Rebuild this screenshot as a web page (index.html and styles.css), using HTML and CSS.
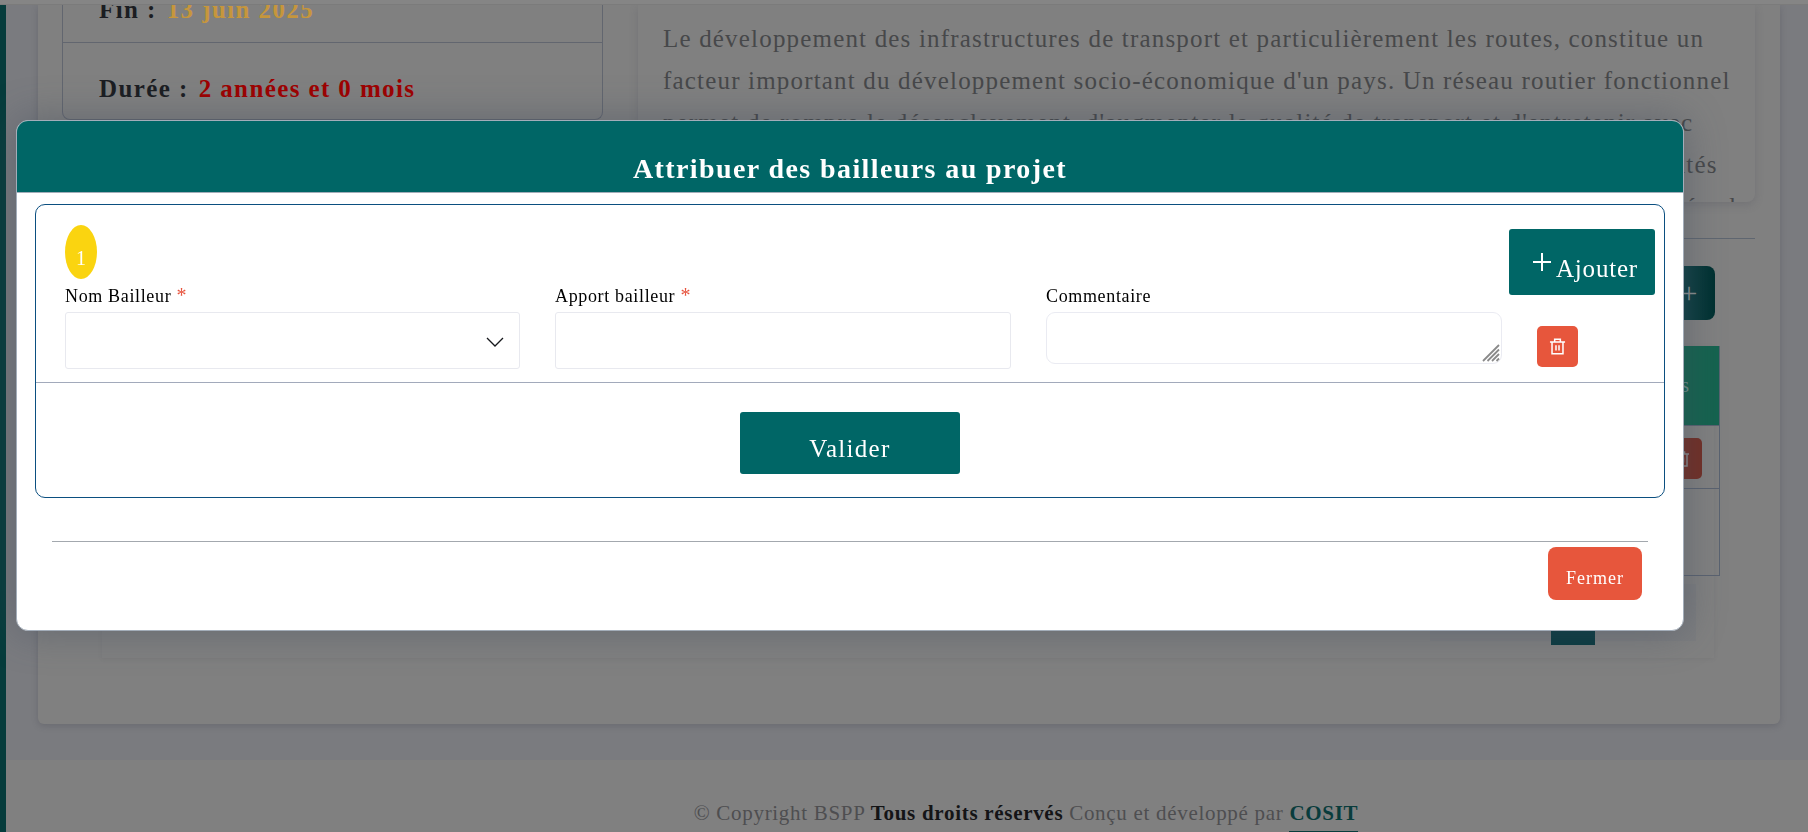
FILE: index.html
```html
<!DOCTYPE html>
<html lang="fr">
<head>
<meta charset="utf-8">
<title>Attribuer des bailleurs au projet</title>
<link rel="stylesheet" href="styles.css">
</head>
<body>
<div class="topbar"></div>
<div class="shell">
  <div class="strip"></div>
  <div class="main">
    <div class="sheet">
      <div class="top-row">
        <div class="info-card">
          <div class="info-row info-first"><span class="info-label">Fin :</span><span class="info-date">13 juin 2025</span></div>
          <div class="info-row info-last"><span class="info-label">Durée :</span><span class="info-red">2 années et 0 mois</span></div>
        </div>
        <div class="desc-card">
          <p class="desc">Le développement des infrastructures de transport et particulièrement les routes, constitue un<br>facteur important du développement socio-économique d'un pays. Un réseau routier fonctionnel<br>permet de rompre le désenclavement, d'augmenter la qualité de transport et d'entretenir avec<br>les territoires des échanges commerciaux réguliers et à soutenir ainsi durablement les activités<br>de production, tout en favorisant l'accès des populations aux services sociaux, et aux marchés, de</p>
        </div>
      </div>
      <div class="rule"></div>
      <div class="add-row"><div class="add-btn">+</div></div>
      <div class="panel">
        <div class="table">
          <div class="thead"><span>Actions</span></div>
          <div class="trow trow-a"><div class="del-dim"><svg class="trash-dim" viewBox="0 0 18 18"><path d="M2 4h14M6.5 4V2h5v2M4 4v12h10V4M7.5 7.5v5M10.5 7.5v5"/></svg></div></div>
          <div class="trow trow-b"></div>
        </div>
        <div class="pager"><div class="page-btn">1</div></div>
      </div>
    </div>
    <div class="footer">
      <p class="foot-text">© Copyright BSPP <strong class="foot-strong">Tous droits réservés</strong> Conçu et développé par <strong class="foot-link">COSIT</strong></p>
    </div>
  </div>
</div>

<div class="modal">
  <div class="modal-head"><h2 class="modal-title">Attribuer des bailleurs au projet</h2></div>
  <div class="box">
    <div class="form">
      <div class="form-main">
        <div class="badge">1</div>
        <div class="fields">
          <div class="field">
            <div class="label">Nom Bailleur <span class="req">*</span></div>
            <div class="control">
              <select class="input"></select>
              <svg class="chevron" viewBox="0 0 18 10"><path d="M1 1l8 8 8-8"/></svg>
            </div>
          </div>
          <div class="field">
            <div class="label">Apport bailleur <span class="req">*</span></div>
            <div class="control"><input class="input" type="text"></div>
          </div>
          <div class="field">
            <div class="label">Commentaire</div>
            <div class="control">
              <textarea class="area"></textarea>
              <svg class="grip" viewBox="0 0 18 18"><path d="M1 17L17 1M5.5 17L17 5.5M10 17l7-7M14.5 17l2.5-2.5"/></svg>
            </div>
          </div>
        </div>
      </div>
      <div class="form-side">
        <button class="btn-add" type="button"><svg class="plus" viewBox="0 0 18 18"><path d="M9 0v18M0 9h18"/></svg><span>Ajouter</span></button>
        <button class="btn-del" type="button"><svg class="trash" viewBox="0 0 18 18"><path d="M1 4.2h16M6 4V1.2h6V4M3.2 4.2v12.6h11.6V4.2M7.4 7.6v5.6M10.6 7.6v5.6"/></svg></button>
      </div>
    </div>
    <div class="submit-row"><button class="btn-submit" type="button">Valider</button></div>
  </div>
  <div class="modal-foot">
    <div class="foot-actions"><button class="btn-close" type="button">Fermer</button></div>
  </div>
</div>
</body>
</html>
```

FILE: styles.css
```css
* { box-sizing: border-box; }
html, body { margin: 0; padding: 0; }
body {
  width: 1808px;
  height: 832px;
  overflow: hidden;
  background: #7a7b7f;
  font-family: "Liberation Serif", serif;
}
.topbar { height: 5px; background: #858585; border-bottom: 1px solid #7b7b7b; }
.shell { display: flex; height: 827px; }
.strip { width: 6px; flex: none; background: #063c3c; }
.main { flex: 1; min-width: 0; display: flex; flex-direction: column; overflow: hidden; }

.sheet {
  flex: none;
  height: 719px;
  margin: 0 28px 0 32px;
  padding: 0 25px 0 24px;
  background: #808080;
  border-radius: 0 0 6px 6px;
  box-shadow: 0 2px 6px rgba(60, 60, 70, .25);
}
.top-row { display: flex; gap: 35px; align-items: flex-start; }
.info-card {
  width: 541px;
  flex: none;
  height: 115px;
  border: 1px solid #62666f;
  border-top: 0;
  border-radius: 0 0 8px 8px;
}
.info-row {
  display: flex;
  align-items: flex-end;
  padding-left: 36px;
  gap: 10px;
  font-size: 25px;
  font-weight: 700;
  letter-spacing: 1.4px;
  white-space: nowrap;
}
.info-first { height: 38px; padding-bottom: 18px; border-bottom: 1px solid #62666f; overflow: hidden; line-height: 28px; }
.info-last { height: 62px; line-height: 28px; padding-bottom: 2px; }
.info-label { color: #1b1d22; }
.info-date { color: #c6963c; }
.info-red { color: #9e0000; }

.desc-card {
  flex: 1;
  height: 197px;
  overflow: hidden;
  padding: 13px 0 0 25px;
  background: #808080;
  border-radius: 0 0 8px 8px;
  box-shadow: 0 3px 8px rgba(70, 70, 80, .22);
}
.desc {
  margin: 0;
  font-size: 25px;
  line-height: 42px;
  letter-spacing: 1.18px;
  white-space: nowrap;
  color: #47484a;
}
.rule { height: 1px; margin-top: 36px; background: #5f6670; }
.add-row { display: flex; justify-content: flex-end; margin: 27px 40px 0 0; }
.add-btn {
  width: 52px;
  height: 54px;
  display: flex;
  align-items: center;
  justify-content: center;
  border-radius: 8px;
  background: linear-gradient(90deg, #184a50, #003030);
  color: #8b8f8f;
  font-size: 30px;
}
.panel {
  height: 312px;
  margin: 26px 41px 0 40px;
  box-shadow: 0 1px 4px rgba(70, 70, 80, .12);
}
.table { margin-right: -6px; border: 1px solid #5a6270; border-top: 0; }
.thead {
  height: 79px;
  display: flex;
  align-items: center;
  justify-content: flex-end;
  padding-right: 30px;
  background: #15634f;
  color: #6f8f88;
  font-size: 20px;
}
.trow { border-top: 1px solid #5a6270; }
.trow-a { height: 63px; display: flex; justify-content: flex-end; padding: 12px 17px 0 0; }
.trow-b { height: 87px; }
.del-dim {
  width: 41px;
  height: 41px;
  display: flex;
  align-items: center;
  justify-content: center;
  border-radius: 5px;
  background: #722f26;
}
.trash-dim { width: 18px; height: 18px; fill: none; stroke: #8a8a8a; stroke-width: 1.5; }
.pager {
  height: 57px;
  margin: 8px 18px 0 1328px;
  display: flex;
  justify-content: center;
  background: #7c7d7f;
}
.page-btn {
  width: 44px;
  height: 61px;
  margin-left: 20px;
  background: #0a3a40;
  color: #8a8f90;
  font-size: 18px;
  text-align: center;
  padding-top: 22px;
}

.footer { flex: none; height: 72px; margin-top: 36px; background: #808080; }
.foot-text {
  margin: 0;
  padding: 38px 0 0 238px;
  text-align: center;
  font-size: 21px;
  line-height: 30px;
  letter-spacing: .7px;
  white-space: nowrap;
  color: #4e4e50;
}
.foot-strong { color: #141416; }
.foot-link { display: inline-block; padding-bottom: 3px; color: #093c3c; border-bottom: 1px solid #093c3c; line-height: 30px; }

.modal {
  position: fixed;
  left: 16px;
  top: 120px;
  width: 1668px;
  height: 511px;
  overflow: hidden;
  background: #fff;
  border: 1px solid #a3adb9;
  border-radius: 12px;
  box-shadow: 0 0 40px rgba(60, 72, 88, .45);
}
.modal-head {
  height: 72px;
  display: flex;
  align-items: flex-end;
  justify-content: center;
  background: #006666;
  border-bottom: 1px solid #a3adb9;
  padding-bottom: 7px;
}
.modal-title {
  margin: 0;
  color: #fff;
  font-size: 28px;
  line-height: 32px;
  font-weight: 700;
  letter-spacing: 1.4px;
}
.box {
  height: 294px;
  margin: 11px 18px 0;
  border: 1px solid #0b4f80;
  border-radius: 10px;
}
.form { display: flex; height: 178px; padding-left: 29px; border-bottom: 1px solid #a2aabb; }
.form-main { width: 1437px; flex: none; padding-top: 20px; }
.badge {
  width: 32px;
  height: 54px;
  border-radius: 50%;
  background: #fad410;
  color: #fff;
  font-size: 20px;
  line-height: 20px;
  text-align: center;
  padding-top: 23px;
}
.fields { display: grid; grid-template-columns: 455px 456px 456px; column-gap: 35px; }
.label {
  height: 33px;
  padding-top: 6px;
  font-size: 18px;
  line-height: 22px;
  letter-spacing: .65px;
  color: #000;
}
.req { color: #e7543e; font-size: 20px; line-height: 0; }
.control { position: relative; }
.input {
  display: block;
  width: 100%;
  height: 57px;
  padding: 0 12px;
  appearance: none;
  background: #fff;
  border: 1px solid #e8e9ef;
  border-radius: 3px;
  outline: 0;
}
.area {
  display: block;
  width: 100%;
  height: 52px;
  resize: none;
  background: #fff;
  border: 1px solid #eaebf2;
  border-radius: 9px;
  outline: 0;
}
.chevron {
  position: absolute;
  right: 16px;
  top: 25px;
  width: 18px;
  height: 10px;
  fill: none;
  stroke: #16181c;
  stroke-width: 1.3;
}
.grip {
  position: absolute;
  right: 2px;
  top: 32px;
  width: 18px;
  height: 18px;
  fill: none;
  stroke: #8a8a8a;
  stroke-width: 1.8;
}
.form-side { margin-left: 7px; padding-top: 24px; }
.btn-add {
  width: 146px;
  height: 66px;
  display: flex;
  align-items: flex-start;
  padding: 24px 0 0 24px;
  gap: 5px;
  background: #006666;
  color: #fff;
  border: 0;
  border-radius: 3px;
  font-family: inherit;
  font-size: 25px;
  letter-spacing: .8px;
  line-height: 28px;
}
.plus { width: 18px; height: 18px; flex: none; fill: none; stroke: #fff; stroke-width: 2; }
.btn-add span { display: block; margin-top: 2px; }
.btn-del {
  display: flex;
  align-items: center;
  justify-content: center;
  width: 41px;
  height: 41px;
  margin: 31px 0 0 28px;
  padding: 0;
  background: #e7563c;
  border: 0;
  border-radius: 5px;
}
.trash { width: 17px; height: 17px; fill: none; stroke: #fff; stroke-width: 1.6; }
.submit-row { display: flex; justify-content: center; padding-top: 29px; }
.btn-submit {
  width: 220px;
  height: 62px;
  padding: 12px 0 0;
  background: #006666;
  color: #fff;
  border: 0;
  border-radius: 3px;
  font-family: inherit;
  font-size: 25px;
  letter-spacing: 1.3px;
  line-height: 28px;
}
.modal-foot { margin: 43px 35px 0; border-top: 1px solid #a3a8ae; padding-top: 5px; }
.foot-actions { display: flex; justify-content: flex-end; padding-right: 6px; }
.btn-close {
  width: 94px;
  height: 53px;
  padding: 9px 0 0;
  background: #e7563c;
  color: #fff;
  border: 0;
  border-radius: 8px;
  font-family: inherit;
  font-size: 18px;
  letter-spacing: 1px;
  line-height: 22px;
}
```
